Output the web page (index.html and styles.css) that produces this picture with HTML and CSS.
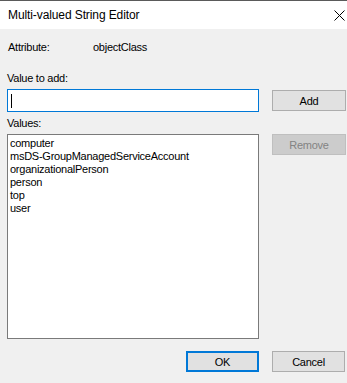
FILE: index.html
```html
<!DOCTYPE html>
<html lang="en">
<head>
  <meta charset="UTF-8" />
  <title>Multi-valued String Editor</title>
  <link rel="stylesheet" href="styles.css">
</head>
<body>
  <div class="dialog">
    <div class="titlebar">
      <span class="title">Multi-valued String Editor</span>
      <svg class="close" width="11" height="11" viewBox="0 0 11 11">
        <path d="M0.5 0.5 L10.5 10.5 M10.5 0.5 L0.5 10.5" stroke="#000" stroke-width="1" fill="none"/>
      </svg>
    </div>

    <div class="content">
      <div class="attr-row">
        <span class="attr-label">Attribute:</span>
        <span>objectClass</span>
      </div>

      <div class="label add-label">Value to add:</div>
      <div class="row">
        <div class="textbox focused"><span class="caret"></span></div>
        <button class="btn add-btn">Add</button>
      </div>

      <div class="label values-label">Values:</div>
      <div class="row">
        <ul class="listbox">
          <li>computer</li>
          <li>msDS-GroupManagedServiceAccount</li>
          <li>organizationalPerson</li>
          <li>person</li>
          <li>top</li>
          <li>user</li>
        </ul>
        <button class="btn" disabled>Remove</button>
      </div>

      <div class="footer">
        <button class="btn ok-btn">OK</button>
        <button class="btn cancel-btn">Cancel</button>
      </div>
    </div>
  </div>
</body>
</html>
```

FILE: styles.css
```css
body {
  margin: 0;
  background-color: #f0f0f0;
  font-family: 'Liberation Sans', Arial, sans-serif;
  font-size: 11px;
  color: #000;
}

.dialog {
  width: 347px;
  height: 383px;
  background-color: #f0f0f0;
}

.titlebar {
  height: 28px;
  border-top: 1px solid #5a5a5a;
  background-color: #fff;
  display: flex;
  justify-content: space-between;
  align-items: center;
  padding: 0 2px 0 8px;
}

.title {
  font-size: 12px;
  letter-spacing: -0.1px;
  color: #000;
}

.close {
  margin-top: 1px;
}

.content {
  padding: 11px 1px 0 7px;
  letter-spacing: -0.25px;
}

.attr-row {
  display: flex;
  line-height: 14px;
}

.attr-label {
  width: 85px;
  padding-left: 1px;
}

.label {
  line-height: 14px;
}

.add-label {
  margin-top: 17px;
}

.values-label {
  margin-top: 4px;
}

.row {
  display: flex;
  gap: 13px;
  align-items: flex-start;
  margin-top: 4px;
}

.textbox {
  box-sizing: border-box;
  width: 252px;
  height: 23px;
  background-color: #fff;
  border: 1px solid #7a7a7a;
  display: flex;
  align-items: center;
  padding-left: 3px;
}

.textbox.focused {
  border-color: #0078d7;
}

.caret {
  width: 1px;
  height: 14px;
  background-color: #000;
}

.listbox {
  box-sizing: border-box;
  list-style: none;
  margin: 0;
  width: 252px;
  height: 205px;
  padding: 2px 2px;
  background-color: #fff;
  border: 1px solid #7a7a7a;
}

.listbox li {
  line-height: 13px;
}

.btn {
  box-sizing: border-box;
  width: 74px;
  height: 21px;
  padding: 0;
  margin: 0;
  font-family: 'Liberation Sans', Arial, sans-serif;
  font-size: 11px;
  letter-spacing: -0.25px;
  color: #000;
  background-color: #e1e1e1;
  border: 1px solid #adadad;
  border-radius: 0;
}

.add-btn {
  margin-top: 1px;
}

.btn:disabled {
  background-color: #cccccc;
  border-color: #bfbfbf;
  color: #838383;
}

.footer {
  display: flex;
  justify-content: flex-end;
  gap: 13px;
  margin-top: 12px;
  padding-right: 1px;
}

.ok-btn {
  width: 73px;
  border: 2px solid #0078d7;
}

.cancel-btn {
  width: 73px;
}
```
